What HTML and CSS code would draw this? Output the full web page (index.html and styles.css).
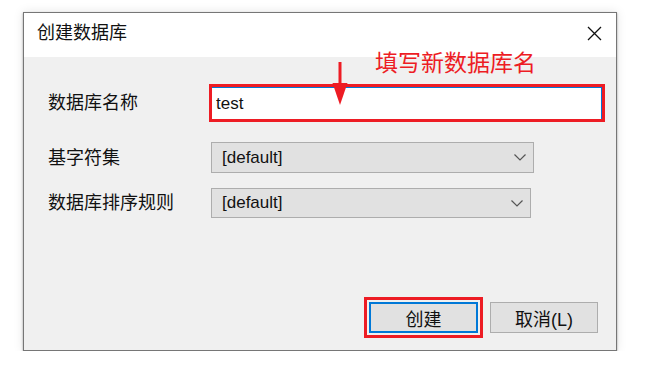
FILE: index.html
```html
<!DOCTYPE html>
<html lang="zh-CN">
<head>
    <meta charset="UTF-8">
    <meta name="viewport" content="width=device-width, initial-scale=1.0">
    <title>创建数据库</title>
    <link rel="stylesheet" href="styles.css">
</head>
<body>
    <div class="dialog">
        <div class="titlebar">
            <span class="title">创建数据库</span>
            <svg class="close" width="15" height="15" viewBox="0 0 15 15">
                <path d="M1 1 L14 14 M14 1 L1 14" stroke="#111" stroke-width="1.3" fill="none"/>
            </svg>
        </div>

        <div class="body">
            <!-- annotations drawn over the form -->
            <div class="note">填写新数据库名</div>
            <svg class="arrow" width="16" height="43" viewBox="0 0 16 43">
                <rect x="6.5" y="0" width="3" height="24" fill="#ed1c24"/>
                <path d="M0.5 21 L15.5 21 L8 43 Z" fill="#ed1c24"/>
            </svg>

            <div class="row row-name">
                <label class="label" for="db-name">数据库名称</label>
                <span class="mark">
                    <input type="text" id="db-name" class="text-input" value="test">
                </span>
            </div>
            <div class="row row-charset">
                <label class="label">基字符集</label>
                <div class="select select-charset">
                    <span>[default]</span>
                    <svg width="12" height="7" viewBox="0 0 12 7"><path d="M0.5 0.5 L6 6 L11.5 0.5" stroke="#555" stroke-width="1.2" fill="none"/></svg>
                </div>
            </div>
            <div class="row row-collation">
                <label class="label">数据库排序规则</label>
                <div class="select select-collation">
                    <span>[default]</span>
                    <svg width="12" height="7" viewBox="0 0 12 7"><path d="M0.5 0.5 L6 6 L11.5 0.5" stroke="#555" stroke-width="1.2" fill="none"/></svg>
                </div>
            </div>

            <div class="actions">
                <button type="button" class="btn btn-create">创建</button>
                <button type="button" class="btn btn-cancel">取消(L)</button>
            </div>
        </div>
    </div>
</body>
</html>
```

FILE: styles.css
```css
body {
    margin: 0;
    padding: 0;
    background-color: #fff;
    font-family: "Liberation Sans", "Noto Sans CJK SC", sans-serif;
    color: #111;
}
.dialog {
    width: 592px;
    margin: 12px 0 0 23px;
    border: 1px solid #767676;
    box-shadow: 0 1px 2px rgba(0,0,0,0.35), 0 0 10px rgba(0,0,0,0.1);
}
.titlebar {
    height: 44px;
    box-sizing: border-box;
    padding: 0 14px 4px 13px;
    display: flex;
    align-items: center;
    justify-content: space-between;
    background-color: #fff;
}
.title {
    font-size: 18px;
    line-height: 20px;
}
.close {
    display: block;
}
.body {
    position: relative;
    height: 293px;
    box-sizing: border-box;
    padding: 27px 18px 17px 24px;
    display: flex;
    flex-direction: column;
    background-color: #f0f0f0;
}
.note {
    position: absolute;
    left: 351px;
    top: -6px;
    font-size: 23px;
    line-height: 24px;
    color: #ed1c24;
}
.arrow {
    position: absolute;
    left: 308px;
    top: 5px;
    z-index: 1;
}
.row {
    display: flex;
    align-items: center;
}
.row-charset {
    margin-top: 20px;
}
.row-collation {
    margin-top: 15px;
}
.label {
    flex: 0 0 161px;
    font-size: 18px;
    line-height: 20px;
}
.mark {
    display: block;
    border: 3px solid #ed1c24;
}
.text-input {
    display: block;
    width: 390px;
    height: 32px;
    box-sizing: border-box;
    margin: 0;
    padding: 0 0 0 4px;
    border-style: solid;
    border-color: #0078d7;
    border-width: 1px 1px 0 0;
    background-color: #fff;
    font-family: inherit;
    font-size: 17px;
    color: #111;
    outline: none;
}
.select {
    margin-left: 2px;
    box-sizing: border-box;
    display: flex;
    align-items: center;
    justify-content: space-between;
    padding: 0 7px 0 10px;
    border: 1px solid #adadad;
    background-color: #e1e1e1;
    font-size: 17px;
}
.select-charset {
    width: 323px;
    height: 31px;
}
.select-collation {
    width: 320px;
    height: 30px;
}
.actions {
    margin-top: auto;
    display: flex;
    justify-content: flex-end;
    gap: 12px;
}
.btn {
    height: 31px;
    box-sizing: border-box;
    margin: 0;
    padding: 0;
    border: 1px solid #adadad;
    background-color: #e1e1e1;
    font-family: inherit;
    font-size: 18px;
    color: #111;
}
.btn-create {
    width: 109px;
    border: 2px solid #0078d7;
    outline: 3px solid #ed1c24;
    outline-offset: 2px;
}
.btn-cancel {
    width: 108px;
}
```
